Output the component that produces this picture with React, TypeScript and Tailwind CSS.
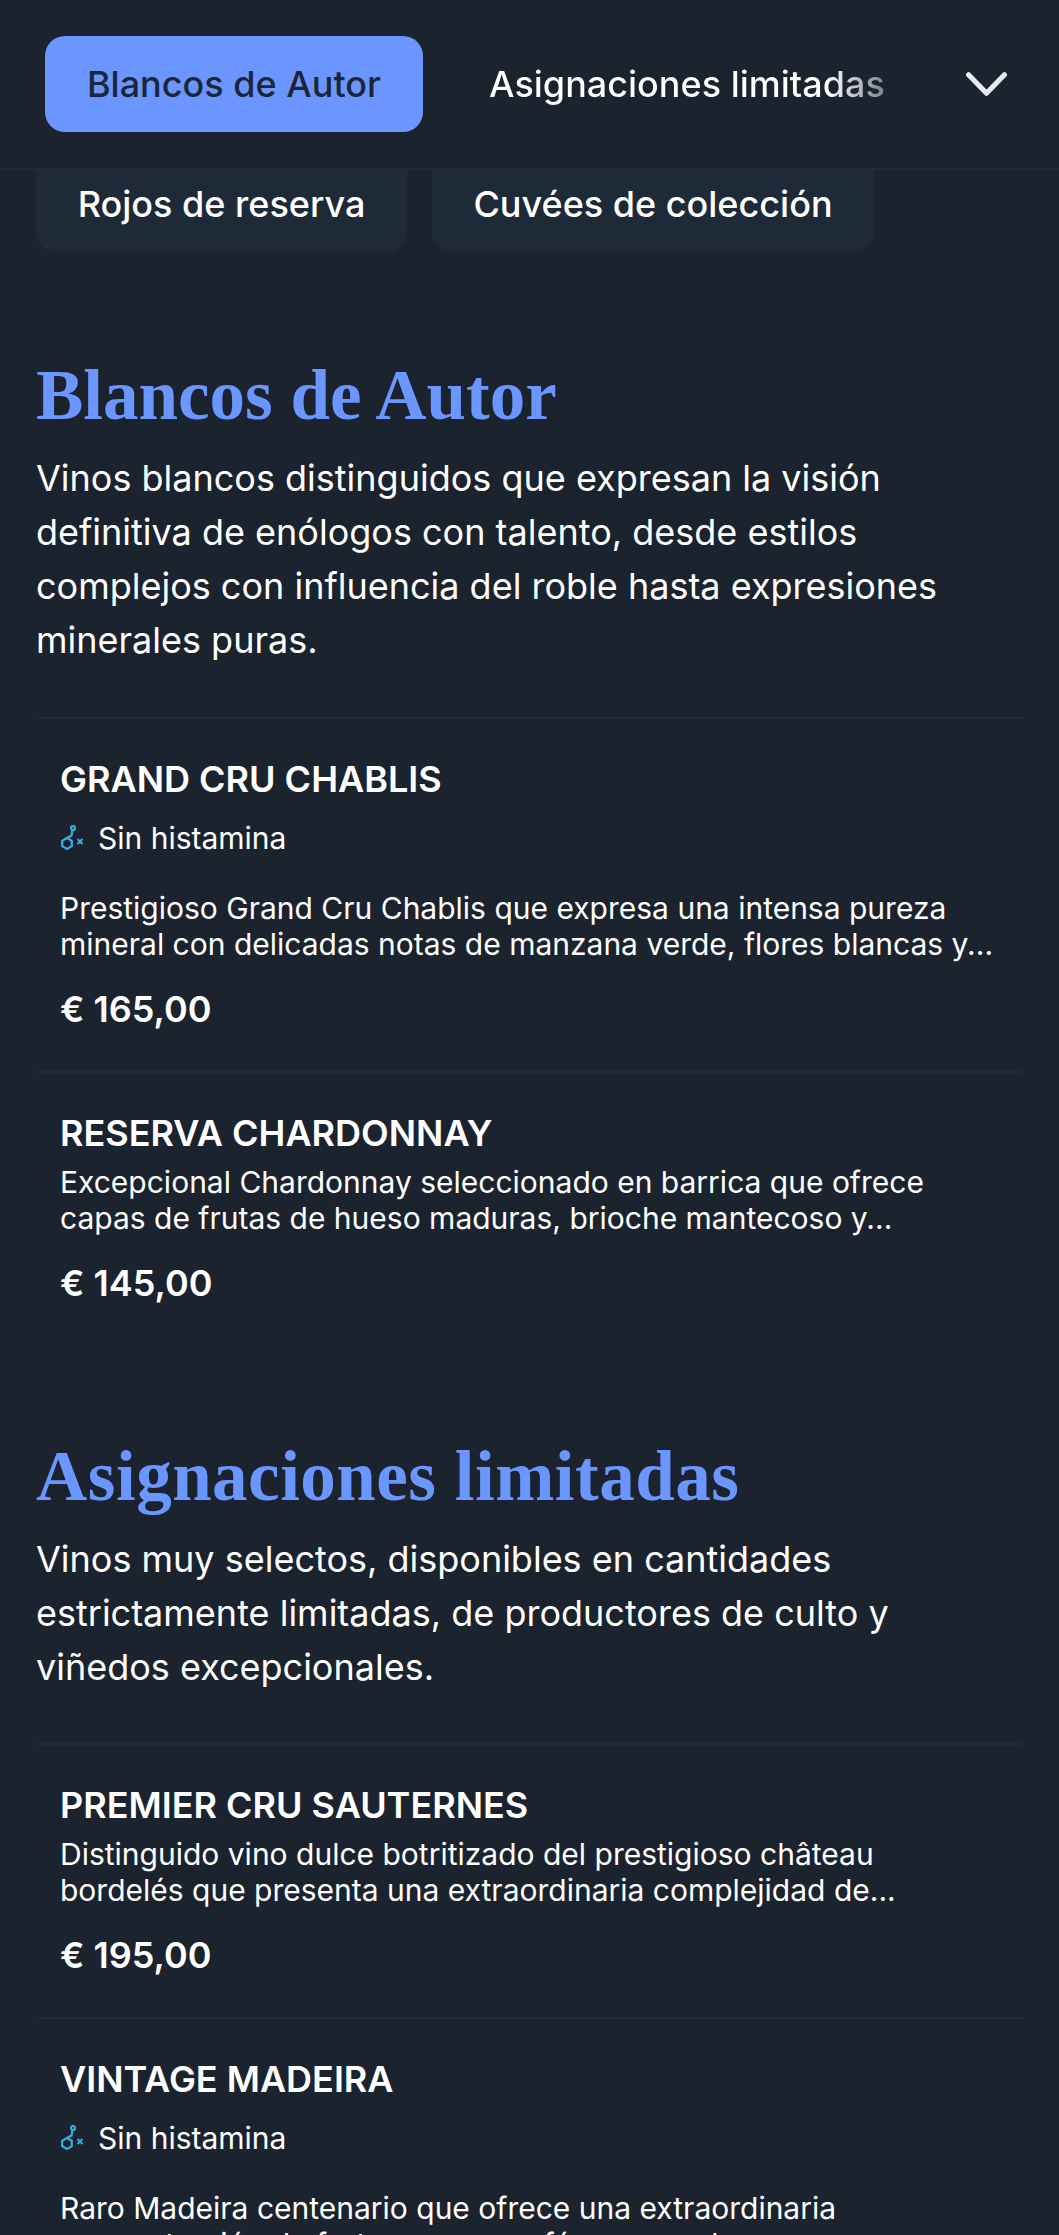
const sans = "font-['Inter',sans-serif]";

const HistamineIcon = () => (
  <svg viewBox="0 0 24 26" className="w-[24px] h-[26px] shrink-0" fill="none" stroke="#35b0dd" strokeWidth="2.2">
    <circle cx="13" cy="3" r="2" />
    <path d="M12.5 5 L11.5 10.5 L7 13" />
    <path d="M7 13 L11.8 15.8 V21.2 L7 24 L2.2 21.2 V15.8 Z" />
    <path d="M17.5 14 L22.5 19 M22.5 14 L17.5 19" strokeWidth="2" />
  </svg>
);

interface WineProps {
  name: string;
  text: string;
  price: string;
  histamine?: boolean;
}

const Wine = ({ name, text, price, histamine }: WineProps) => (
  <div className="border-t-2 border-[#1f2c38] px-6 pt-[35px] pb-[37px]">
    <h3 className="text-[36px] leading-[50px] font-semibold text-white">{name}</h3>
    {histamine && (
      <div className="flex items-center gap-[14px] h-[40px] mt-[14px]">
        <HistamineIcon />
        <span className="text-[30px] leading-[40px] text-white">Sin histamina</span>
      </div>
    )}
    <p className={histamine ? "mt-[32px] text-[30px] leading-[36px] text-white" : "mt-[6px] text-[30px] leading-[36px] text-white"}>{text}</p>
    <p className="text-[36px] leading-[50px] font-semibold text-white mt-[22px]">{price}</p>
  </div>
);

const App = () => {
  return (
    <div className={`${sans} h-[2235px] overflow-hidden bg-[#1b232e]`}>
      <header className="flex items-center h-[170px] border-b-2 border-[#1f2c38] pl-[45px]">
        <button className="w-[378px] h-[96px] rounded-[20px] bg-[#6b96ff] text-[36px] font-medium text-[#1b2638]">
          Blancos de Autor
        </button>
        <div className="ml-[66px] w-[395px] overflow-hidden whitespace-nowrap text-[36px] font-medium bg-gradient-to-r from-white from-[86%] to-[#7f858e] bg-clip-text text-transparent">
          Asignaciones limitadas
        </div>
        <svg viewBox="0 0 40 23" className="w-[41px] h-[24px] ml-[82px]" fill="none" stroke="#e8eaed" strokeWidth="5" strokeLinecap="round" strokeLinejoin="round">
          <path d="M2.5 2.5 L20 20.5 L37.5 2.5" />
        </svg>
      </header>

      <nav className="flex gap-[25px] px-[36px]">
        <button className="w-[371px] h-[82px] pb-[14px] rounded-b-[20px] bg-[#1e2a38] text-[36px] font-medium text-white">
          Rojos de reserva
        </button>
        <button className="w-[442px] h-[82px] pb-[14px] rounded-b-[20px] bg-[#1e2a38] text-[36px] font-medium text-white">
          Cuvées de colección
        </button>
      </nav>

      <main className="px-[36px]">
        <section className="pt-[103px]">
          <h2 className="font-['Liberation_Serif',serif] font-bold text-[71px] leading-[80px] text-[#6b96ff]">Blancos de Autor</h2>
          <p className="mt-[16px] text-[36px] leading-[54px] text-white">
            Vinos blancos distinguidos que expresan la visión definitiva de enólogos con talento, desde estilos complejos con influencia del roble hasta expresiones minerales puras.
          </p>
          <div className="mt-[50px]">
            <Wine
              name="GRAND CRU CHABLIS"
              histamine
              text="Prestigioso Grand Cru Chablis que expresa una intensa pureza mineral con delicadas notas de manzana verde, flores blancas y..."
              price="€ 165,00"
            />
            <Wine
              name="RESERVA CHARDONNAY"
              text="Excepcional Chardonnay seleccionado en barrica que ofrece capas de frutas de hueso maduras, brioche mantecoso y..."
              price="€ 145,00"
            />
          </div>
        </section>
        <section className="pt-[91px]">
          <h2 className="font-['Liberation_Serif',serif] font-bold text-[71px] leading-[80px] tracking-[0.5px] text-[#6b96ff]">Asignaciones limitadas</h2>
          <p className="mt-[16px] text-[36px] leading-[54px] text-white">
            Vinos muy selectos, disponibles en cantidades estrictamente limitadas, de productores de culto y viñedos excepcionales.
          </p>
          <div className="mt-[49px]">
            <Wine
              name="PREMIER CRU SAUTERNES"
              text="Distinguido vino dulce botritizado del prestigioso château bordelés que presenta una extraordinaria complejidad de..."
              price="€ 195,00"
            />
            <Wine
              name="VINTAGE MADEIRA"
              histamine
              text="Raro Madeira centenario que ofrece una extraordinaria concentración de frutos secos, café y caramelo con una..."
              price="€ 210,00"
            />
          </div>
        </section>
      </main>
    </div>
  );
};

export default App;
